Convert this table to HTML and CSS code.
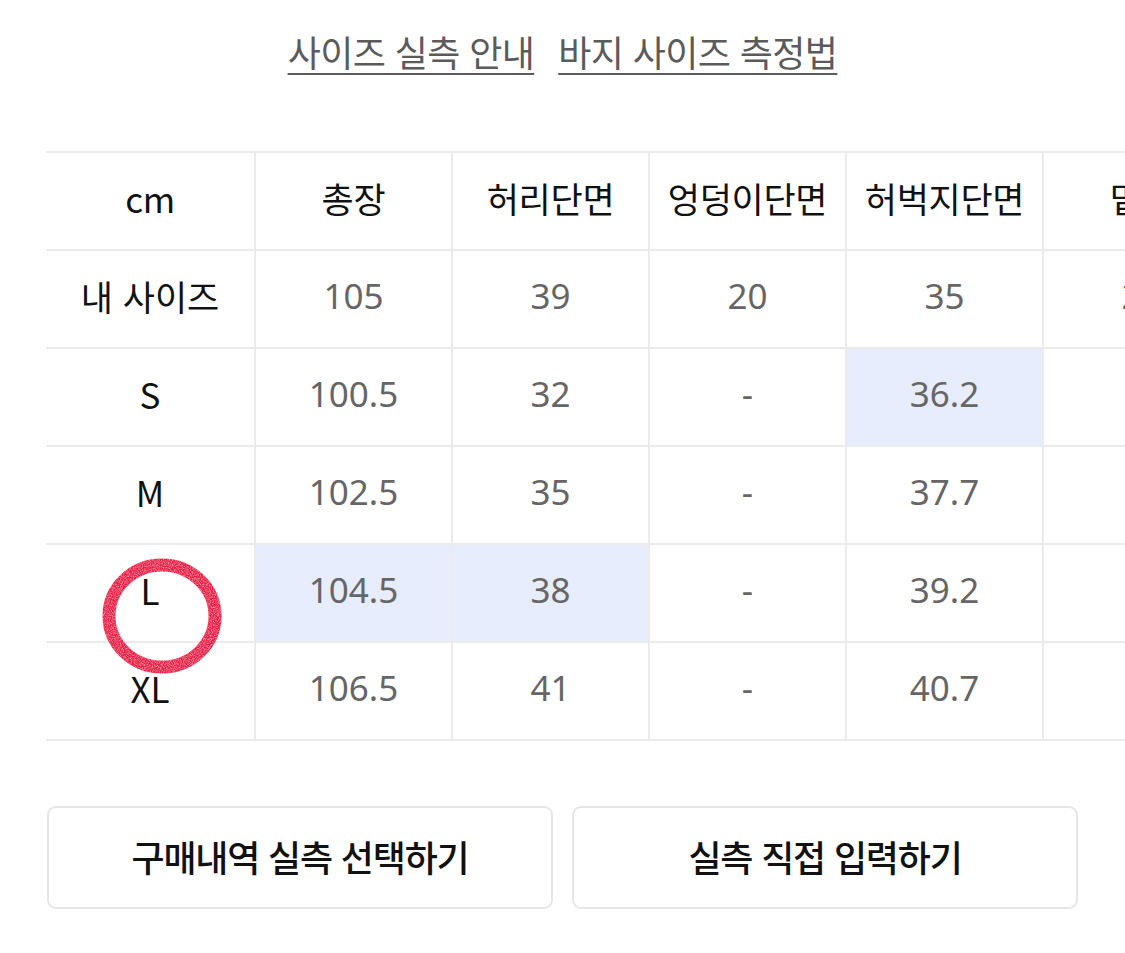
FILE: index.html
```html
<!DOCTYPE html>
<html lang="ko">
<head>
<meta charset="utf-8">
<link rel="stylesheet" href="styles.css">
</head>
<body>
<div class="page">
  <nav class="links">
    <a class="link" href="#">사이즈 실측 안내</a>
    <a class="link" href="#">바지 사이즈 측정법</a>
  </nav>

  <div class="table-wrap">
    <table class="size-table">
      <colgroup>
        <col class="c-first">
        <col class="c-col"><col class="c-col"><col class="c-col"><col class="c-col"><col class="c-col"><col class="c-col">
      </colgroup>
      <thead>
        <tr>
          <th>cm</th><th>총장</th><th>허리단면</th><th>엉덩이단면</th><th>허벅지단면</th><th>밑위</th><th>밑단단면</th>
        </tr>
      </thead>
      <tbody>
        <tr><th>내 사이즈</th><td>105</td><td>39</td><td>20</td><td>35</td><td>26</td><td></td></tr>
        <tr><th>S</th><td>100.5</td><td>32</td><td>-</td><td class="hl">36.2</td><td></td><td></td></tr>
        <tr><th>M</th><td>102.5</td><td>35</td><td>-</td><td>37.7</td><td></td><td></td></tr>
        <tr><th>L</th><td class="hl">104.5</td><td class="hl">38</td><td>-</td><td>39.2</td><td></td><td></td></tr>
        <tr><th>XL</th><td>106.5</td><td>41</td><td>-</td><td>40.7</td><td></td><td></td></tr>
      </tbody>
    </table>
    <svg class="mark" width="130" height="130" viewBox="0 0 130 130">
      <defs>
        <filter id="crayon">
          <feTurbulence type="fractalNoise" baseFrequency="0.9" numOctaves="2" result="n"/>
          <feColorMatrix in="n" type="matrix" values="0 0 0 0 1  0 0 0 0 1  0 0 0 0 1  0 0 0 -1.2 1.45" result="m"/>
          <feComposite in="SourceGraphic" in2="m" operator="in"/>
        </filter>
      </defs>
      <ellipse cx="65" cy="64" rx="53" ry="51" fill="none" stroke="#ea1f45" stroke-width="13" filter="url(#crayon)"/>
    </svg>
  </div>

  <div class="actions">
    <button class="btn" type="button">구매내역 실측 선택하기</button>
    <button class="btn" type="button">실측 직접 입력하기</button>
  </div>
</div>
</body>
</html>
```

FILE: styles.css
```css
* { box-sizing: border-box; }
html, body { margin: 0; padding: 0; background: #fff; }
body {
  font-family: "Noto Sans CJK KR", "Noto Sans", sans-serif;
  color: #111;
  width: 1125px;
  overflow: hidden;
}
.page { padding: 0; }

.links {
  display: flex;
  justify-content: center;
  gap: 24px;
  padding-top: 28px;
  height: 151px;
}
.link {
  font-size: 36px;
  line-height: 46px;
  color: #5b5b5b;
  text-decoration: underline;
  text-decoration-thickness: 2px;
  text-underline-offset: 6px;
  letter-spacing: -0.6px;
}

.table-wrap {
  position: relative;
  margin-left: 46px;
  overflow: hidden;
  width: 1079px;
}
.size-table {
  border-collapse: collapse;
  table-layout: fixed;
  width: 1391px;
}
.c-first { width: 209px; }
.c-col { width: 197px; }
.size-table th,
.size-table td {
  height: 98px;
  padding: 0 0 8px;
  text-align: center;
  vertical-align: middle;
  border: 2px solid #ebebeb;
  font-size: 35px;
  white-space: nowrap;
}
.size-table tr > :first-child { border-left: none; }
.size-table th { font-weight: 400; color: #111; }
.size-table thead th { letter-spacing: -0.3px; }
.size-table td {
  color: #666;
  font-family: "Noto Sans", "Noto Sans CJK KR", sans-serif;
  font-size: 35px;
}
.size-table td.hl { background: #e7edfc; }

.mark {
  position: absolute;
  left: 51px;
  top: 401px;
  pointer-events: none;
}

.actions {
  display: flex;
  gap: 19px;
  padding: 65px 47px 0;
}
.btn {
  flex: 1;
  height: 103px;
  padding: 0 0 4px;
  background: #fff;
  border: 2px solid #e6e6e6;
  border-radius: 9px;
  font-family: "Noto Sans CJK KR", sans-serif;
  font-size: 36px;
  font-weight: 500;
  color: #111;
  letter-spacing: -1.2px;
}
```
